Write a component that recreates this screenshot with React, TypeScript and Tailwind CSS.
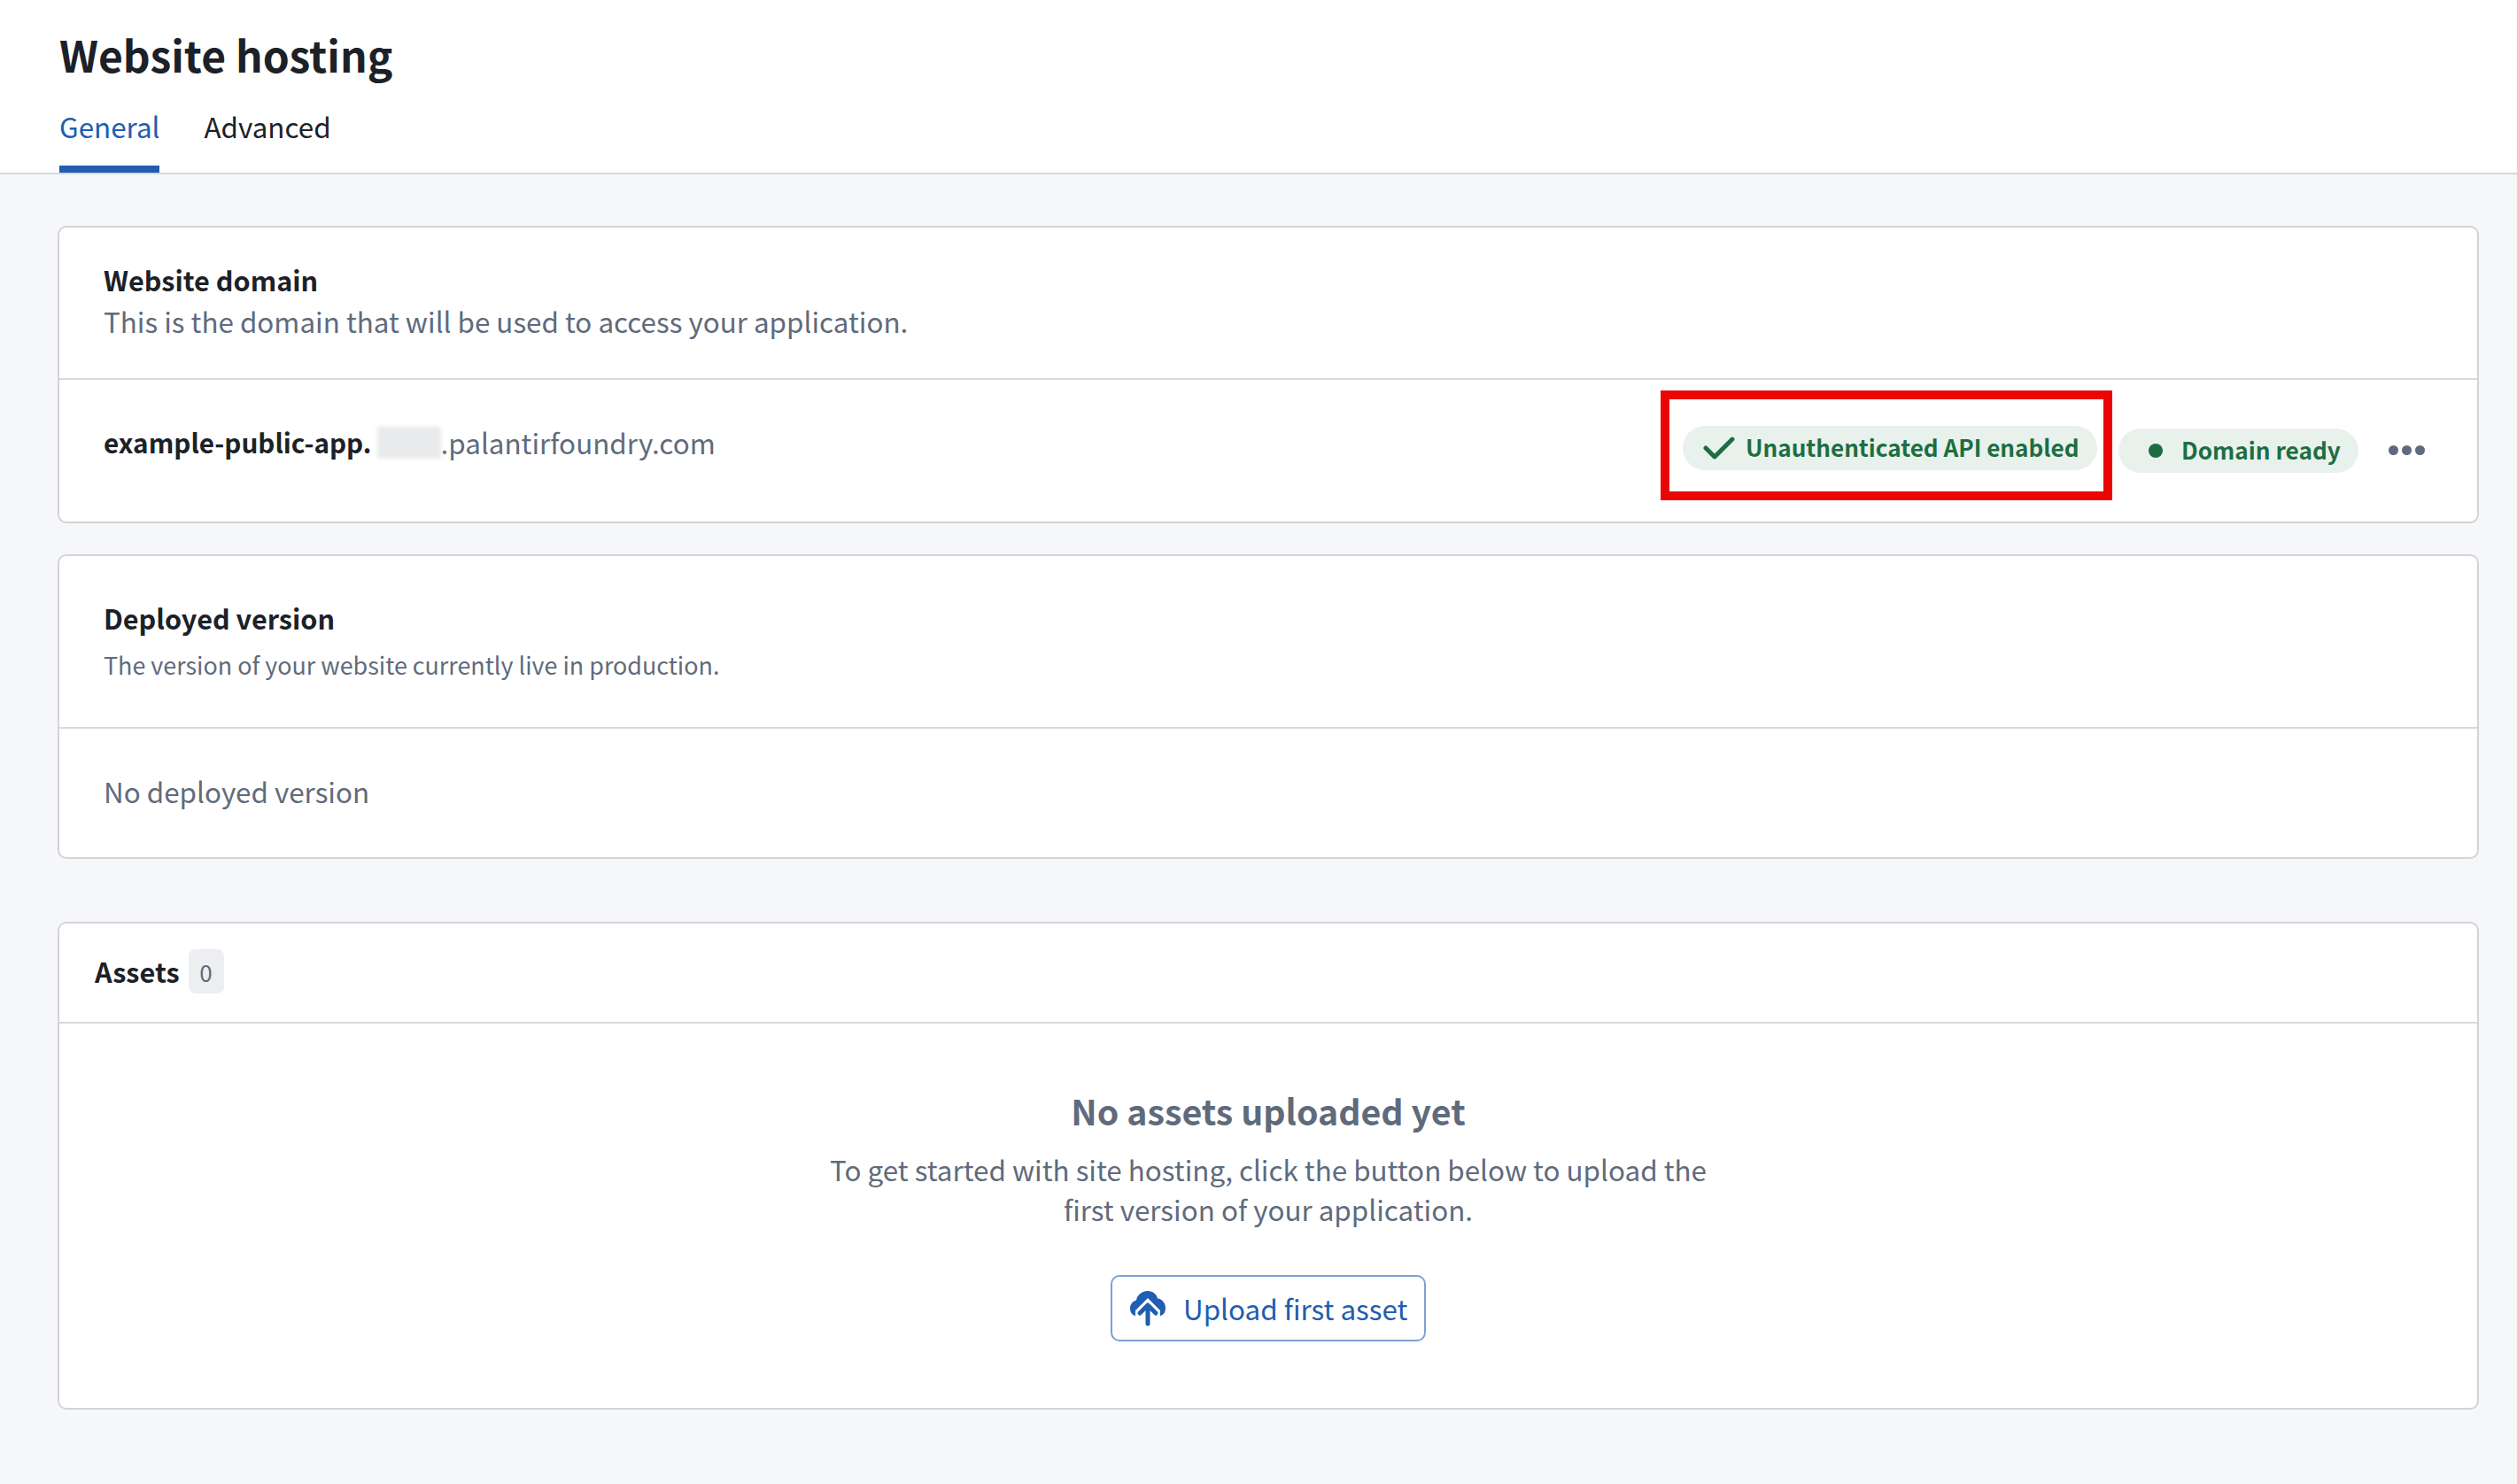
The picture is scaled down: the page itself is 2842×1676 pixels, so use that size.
const FONT = "font-['Noto_Sans_CJK_SC','Noto_Sans',sans-serif]";

function CloudUpload() {
  return (
    <svg viewBox="0 0 40 40" className="h-[40px] w-[40px] shrink-0">
      <path
        className="fill-[#215db0]"
        d="M20 0C25.5 0 30 3.5 31 8.5C36 9 40 13.5 40 19C40 24 37.5 27.5 34 28L34 22L20 8L6 22L6 28C2.5 27.5 0 24 0 19.5C0 15 3 11.5 7 10.5C8 4.5 13.5 0 20 0Z"
      />
      <path
        className="fill-none stroke-[#215db0]"
        strokeWidth="5"
        strokeLinecap="round"
        strokeLinejoin="round"
        d="M11 25L20 16L29 25M20 16L20 37"
      />
    </svg>
  );
}

function Tick() {
  return (
    <svg viewBox="0 0 16 16" className="h-[40px] w-[40px] shrink-0 fill-[#1c6e42]">
      <path d="M14 3c-.28 0-.53.11-.71.29L6 10.59l-3.29-3.3a1.003 1.003 0 00-1.42 1.42l4 4c.18.18.43.29.71.29s.53-.11.71-.29l8-8A1.003 1.003 0 0014 3z" />
    </svg>
  );
}

export default function App() {
  return (
    <div className={`${FONT} min-h-[1676px] bg-[#f6f7f9] text-[#1c2127]`}>
      <header className="h-[197px] border-b-2 border-[#d6d7da] bg-white px-[67px]">
        <h1 className="pt-[30px] text-[48px] leading-[62px] font-semibold whitespace-nowrap">Website hosting</h1>
        <nav className="mt-[27px] flex gap-[50px] text-[31.4px] leading-[48px]">
          <span className="h-[76px] border-b-[8px] border-[#215db0] text-[#215db0]">General</span>
          <span>Advanced</span>
        </nav>
      </header>

      <main className="flex flex-col pt-[58px] pr-[43px] pl-[65px]">
        <section className="h-[336px] rounded-[10px] border-2 border-[#d3d4d7] bg-white">
          <div className="h-[172px] border-b-2 border-[#d8d9dc] px-[50px] pt-[35px]">
            <h2 className="text-[30.6px] leading-[48px] font-semibold">Website domain</h2>
            <p className="text-[31.4px] leading-[46px] text-[#5f6b7c]">
              This is the domain that will be used to access your application.
            </p>
          </div>
          <div className="flex items-start pr-[59px] pl-[50px]">
            <div className="mt-[47px] flex items-center text-[31.4px] leading-[48px] text-[#5f6b7c]">
              <span className="text-[29.7px] font-semibold text-[#1c2127]">example-public-app.</span>
              <span className="ml-[6px] h-[36px] w-[72px] bg-[#e9eaec] blur-[2px]" />
              <span>.palantirfoundry.com</span>
            </div>
            <div className="ml-auto flex items-start">
              <div className="mt-[12px] flex h-[124px] w-[510px] items-center border-[10px] border-[#eb0505] pr-[7px] pl-[15px]">
                <span className="mt-[6px] flex h-[50px] flex-1 items-center rounded-full bg-[#e9f1ed] pl-[21px] text-[26.1px] font-semibold whitespace-nowrap text-[#1c6e42]">
                  <Tick />
                  <span className="ml-[10px]">Unauthenticated API enabled</span>
                </span>
              </div>
              <span className="mt-[55px] ml-[7px] flex h-[50px] w-[271px] items-center rounded-full bg-[#e9f1ed] pl-[34px] text-[26.2px] font-semibold whitespace-nowrap text-[#1c6e42]">
                <span className="h-[16px] w-[16px] rounded-full bg-[#1c6e42]" />
                <span className="ml-[21px]">Domain ready</span>
              </span>
              <span className="mt-[74px] ml-[34px] flex gap-[4px]">
                <span className="h-[11px] w-[11px] rounded-full bg-[#5f6b7c]" />
                <span className="h-[11px] w-[11px] rounded-full bg-[#5f6b7c]" />
                <span className="h-[11px] w-[11px] rounded-full bg-[#5f6b7c]" />
              </span>
            </div>
          </div>
        </section>

        <section className="mt-[35px] h-[344px] rounded-[10px] border-2 border-[#d3d4d7] bg-white">
          <div className="h-[195px] border-b-2 border-[#d8d9dc] px-[50px] pt-[46px]">
            <h2 className="text-[30.6px] leading-[48px] font-semibold">Deployed version</h2>
            <p className="mt-[7px] text-[26.9px] leading-[44px] text-[#5f6b7c]">
              The version of your website currently live in production.
            </p>
          </div>
          <p className="px-[50px] pt-[47px] text-[31.4px] leading-[48px] text-[#5f6b7c]">No deployed version</p>
        </section>

        <section className="mt-[71px] h-[551px] rounded-[10px] border-2 border-[#d3d4d7] bg-white">
          <div className="flex h-[113px] items-center border-b-2 border-[#d8d9dc] pb-[3px] pl-[40px]">
            <h2 className="text-[30.6px] leading-[48px] font-semibold">Assets</h2>
            <span className="ml-[10px] flex h-[50px] w-[40px] items-center justify-center rounded-[8px] bg-[#eceef2] text-[26px] text-[#5f6b7c]">
              0
            </span>
          </div>
          <div className="flex flex-col items-center pt-[70px] text-center text-[#5f6b7c]">
            <h3 className="text-[39.3px] leading-[56px] font-semibold whitespace-nowrap">No assets uploaded yet</h3>
            <p className="mt-[16px] w-[1000px] text-[31.4px] leading-[45px]">
              To get started with site hosting, click the button below to upload the first version of your application.
            </p>
            <button className="mt-[52px] flex h-[75px] w-[356px] items-center rounded-[10px] border-2 border-[#7f9fd6] pl-[20px] text-[31.4px] whitespace-nowrap text-[#215db0]">
              <CloudUpload />
              <span className="ml-[20px]">Upload first asset</span>
            </button>
          </div>
        </section>
      </main>
    </div>
  );
}
